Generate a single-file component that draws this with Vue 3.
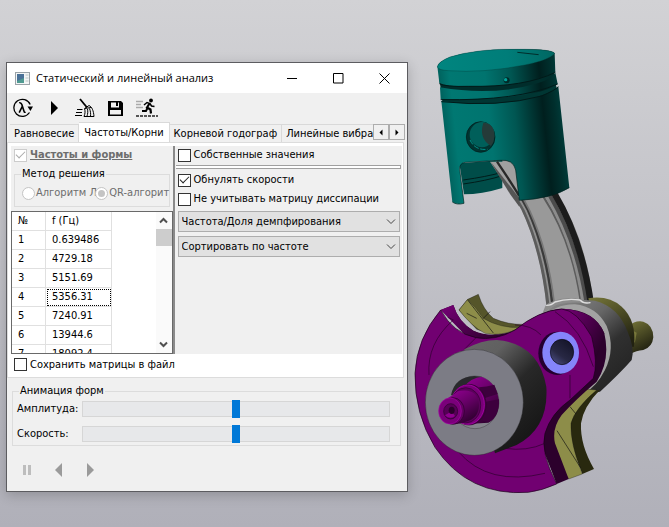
<script setup>
import { ref } from 'vue'

const tabs = ['Равновесие', 'Частоты/Корни', 'Корневой годограф', 'Линейные вибра']
const activeTab = ref(1)
const frequencies = ['0.639486', '4729.18', '5151.69', '5356.31', '7240.91', '13944.6', '18092.4']
const selected = ref(3)
const method = ref('qr')
const eigenvalues = ref(false)
const zeroVelocity = ref(true)
const ignoreDissipation = ref(false)
const saveMatrices = ref(false)
const showForms = ref(true)
const amplitude = ref(50)
const speed = ref(50)
</script>

<template>
  <main class="desktop">
    <section class="dialog">
      <header class="titlebar">
        <svg class="app-icon" width="15" height="13" viewBox="0 0 15 13">
          <rect x=".5" y=".5" width="14" height="12" fill="#f3f5f5" stroke="#9aa3a8" />
          <rect x="2" y="2" width="7" height="9" fill="#4f9a91" />
          <path d="M2 2h7v4L2 9z" fill="#4a7197" />
          <path d="M10.500 3h3M10.500 6h3M10.500 9h3" stroke="#b9c6c6" />
        </svg>
        <h1>Статический и линейный анализ</h1>
        <button class="win" aria-label="Свернуть"><svg width="11" height="11" viewBox="0 0 11 11"><path d="M0 5.500h10" /></svg></button>
        <button class="win" aria-label="Развернуть"><svg width="11" height="11" viewBox="0 0 11 11"><path d="M.5.5h9.500v9.500H.5z" /></svg></button>
        <button class="win" aria-label="Закрыть"><svg width="11" height="11" viewBox="0 0 11 11"><path d="M.5.5l10 10M10.500.5l-10 10" /></svg></button>
      </header>

      <nav class="toolbar">
        <button aria-label="Собственные значения">
          <svg width="22" height="20" viewBox="0 0 22 20">
            <path d="M18.200 6.500A8.500 8.500 0 1 0 17.500 14.500" fill="none" stroke="#000" stroke-width="1.300" />
            <path d="M15.500 8.500h5.500l-2.600 4.500z" />
            <path d="M7.200 4.800c2-.6 2.300.6 2.800 2.200l2 6.300c.3 1 .8 1.200 1.500.7M10.400 8.200L7.200 14.600" fill="none" stroke="#000" stroke-width="1.600" />
          </svg>
        </button>
        <button aria-label="Пуск">
          <svg width="22" height="20" viewBox="0 0 22 20"><path d="M8 3l7 7-7 7z" /></svg>
        </button>
        <button aria-label="Очистить">
          <svg width="22" height="20" viewBox="0 0 22 20" fill="none" stroke="#000">
            <path d="M6 1l7 8.500" stroke-width="1.800" />
            <path d="M10.500 10.500l4.500-3c3 1.500 4.500 5 5 11h-10c1-2.500 1.500-5 .5-8zM11 10.500l6-1M13.500 11c.5 2.500.3 5-.5 7M15.500 10.500c1 2.500 1.300 5 1 8M3 11.500h5.500M2 14.500h6M1 17.500h7" />
          </svg>
        </button>
        <button aria-label="Сохранить">
          <svg width="22" height="20" viewBox="0 0 22 20">
            <path d="M3 3h13l2 2v13H3z" />
            <path d="M6 4.500h8v5H6zM5 12h11v4.500H5z" fill="#f0f0f0" /><path d="M11 4h2v4h-2z" />
          </svg>
        </button>
        <button aria-label="Запуск анимации">
          <svg width="22" height="20" viewBox="0 0 22 20" fill="none">
            <path d="M0 3.500h7M0 6.500h5M0 9.500h7" stroke="#aaa" stroke-width="1.400" />
            <circle cx="15" cy="2.500" r="1.900" fill="#000" />
            <path d="M8 7l3-2.500 3 1 1.500 2.500 3 .5" stroke="#000" stroke-width="1.500" />
            <path d="M13.500 5.500l-2.500 4 3.500 2 .5 4" stroke="#000" stroke-width="2.200" />
            <path d="M11.500 10l-1.500 3H6" stroke="#000" stroke-width="1.900" />
            <path d="M0 18h22" stroke="#222" stroke-width="1.500" stroke-dasharray="3 1" />
          </svg>
        </button>
      </nav>

      <div class="tabbar">
        <div class="tabs" role="tablist">
          <button v-for="(tab, i) in tabs" :key="tab" role="tab" :aria-selected="activeTab === i" :class="{ active: activeTab === i }" @click="activeTab = i">{{ tab }}</button>
        </div>
        <button class="tab-scroll" aria-label="Назад"><svg width="6" height="7" viewBox="0 0 6 7"><path d="M4.500.5v6l-3-3z" /></svg></button>
        <button class="tab-scroll" aria-label="Вперёд"><svg width="6" height="7" viewBox="0 0 6 7"><path d="M1.500.5v6l3-3z" /></svg></button>
      </div>

      <div class="pane">
        <div class="split">
          <div class="left">
            <div class="solver">
              <label class="check heading"><input v-model="showForms" type="checkbox" disabled /><span>Частоты и формы</span></label>
              <fieldset class="methods">
                <legend>Метод решения</legend>
                <label><input v-model="method" type="radio" name="method" value="l" disabled /><span>Алгоритм Л</span></label>
                <label><input v-model="method" type="radio" name="method" value="qr" disabled /><span>QR-алгорит</span></label>
              </fieldset>
            </div>
            <div class="list">
              <div class="viewport">
                <table>
                  <thead><tr><th>№</th><th>f (Гц)</th></tr></thead>
                  <tbody>
                    <tr v-for="(f, i) in frequencies" :key="f" @click="selected = i">
                      <td>{{ i + 1 }}</td>
                      <td :class="{ focused: selected === i }">{{ f }}</td>
                    </tr>
                  </tbody>
                </table>
              </div>
              <div class="scrollbar">
                <button aria-label="Вверх"><svg width="9" height="7" viewBox="0 0 9 7"><path d="M1 5.500l3.500-3.500L8 5.500" /></svg></button>
                <span class="grip"></span>
                <button class="down" aria-label="Вниз"><svg width="9" height="7" viewBox="0 0 9 7"><path d="M1 1.500l3.500 3.500L8 1.500" /></svg></button>
              </div>
            </div>
          </div>
          <div class="splitter"></div>
          <div class="right">
            <label class="check"><input v-model="eigenvalues" type="checkbox" /><span>Собственные значения</span></label>
            <div class="groove"></div>
            <label class="check"><input v-model="zeroVelocity" type="checkbox" /><span>Обнулять скорости</span></label>
            <label class="check"><input v-model="ignoreDissipation" type="checkbox" /><span>Не учитывать матрицу диссипации</span></label>
            <div class="combo">
              <select aria-label="Представление"><option>Частота/Доля демпфирования</option></select>
              <svg width="10" height="6" viewBox="0 0 10 6"><path d="M1 .5l4 4 4-4" /></svg>
            </div>
            <div class="combo">
              <select aria-label="Сортировка"><option>Сортировать по частоте</option></select>
              <svg width="10" height="6" viewBox="0 0 10 6"><path d="M1 .5l4 4 4-4" /></svg>
            </div>
          </div>
        </div>
        <label class="check save"><input v-model="saveMatrices" type="checkbox" /><span>Сохранить матрицы в файл</span></label>
      </div>

      <fieldset class="animation">
        <legend>Анимация форм</legend>
        <label for="amplitude">Амплитуда:</label>
        <input id="amplitude" v-model="amplitude" type="range" />
        <label for="speed">Скорость:</label>
        <input id="speed" v-model="speed" type="range" />
      </fieldset>
      <div class="player">
        <button aria-label="Пауза" disabled><svg width="12" height="14" viewBox="0 0 12 14"><path d="M2 2h3v10H2zM7 2h3v10H7z" fill="#bdbdbd" /></svg></button>
        <button aria-label="Предыдущий"><svg width="12" height="14" viewBox="0 0 12 14"><path d="M9 0v14L2 7z" fill="#9a9a9a" /></svg></button>
        <button aria-label="Следующий"><svg width="12" height="14" viewBox="0 0 12 14"><path d="M2 0v14l7-7z" fill="#9a9a9a" /></svg></button>
      </div>
    </section>

    <svg class="model" viewBox="408 0 261 527" aria-hidden="true">
      <defs>
        <linearGradient id="teal" gradientUnits="userSpaceOnUse" x1="38" y1="60" x2="425" y2="20">
          <stop offset="0" stop-color="#00645f" /><stop offset=".08" stop-color="#007872" /><stop offset=".35" stop-color="#00746f" />
          <stop offset=".55" stop-color="#005652" /><stop offset=".77" stop-color="#001f1e" /><stop offset=".86" stop-color="#002f2d" /><stop offset="1" stop-color="#00504d" />
        </linearGradient>
        <linearGradient id="crown"><stop offset="0" stop-color="#00857f" /><stop offset=".6" stop-color="#007d79" /><stop offset="1" stop-color="#006762" /></linearGradient>
        <linearGradient id="hub" x1="0" y1="0" x2=".7" y2="1"><stop offset="0" stop-color="#666" /><stop offset=".25" stop-color="#606060" /><stop offset=".55" stop-color="#282828" /><stop offset="1" stop-color="#151515" /></linearGradient>
        <linearGradient id="bearing" x1="0" y1="0" x2=".8" y2="1"><stop offset="0" stop-color="#909090" /><stop offset=".4" stop-color="#666" /><stop offset=".65" stop-color="#303030" /><stop offset="1" stop-color="#222" /></linearGradient>
        <linearGradient id="olive" x1="0" y1="0" x2=".5" y2="1"><stop offset="0" stop-color="#77773a" /><stop offset=".4" stop-color="#555529" /><stop offset="1" stop-color="#222211" /></linearGradient>
        <linearGradient id="purpleSide" x1="0" y1="0" x2="1" y2=".7"><stop offset="0" stop-color="#770077" /><stop offset=".5" stop-color="#500050" /><stop offset="1" stop-color="#280028" /></linearGradient>
        <linearGradient id="shaft" x1="0" y1="0" x2=".6" y2="1"><stop offset="0" stop-color="#960096" /><stop offset=".5" stop-color="#680068" /><stop offset="1" stop-color="#300030" /></linearGradient>
        <linearGradient id="bore" x1="0" y1="1" x2=".7" y2="0"><stop offset="0" stop-color="#53558f" /><stop offset=".45" stop-color="#282844" /><stop offset="1" stop-color="#15152a" /></linearGradient>
      </defs>

      <!-- connecting rod -->
      <g transform="translate(480 150) scale(.33333)" fill="none">
        <path d="M33 35Q90 120 120 170Q185 300 200 478L342 465Q315 250 228 130L105 25z" fill="#999" />
        <path d="M38 35Q97 115 130 175Q189 300 207 472" stroke="#5c5c5c" stroke-width="14" />
        <path d="M45 35Q103 118 137 180Q192 300 211 460" stroke="#919191" stroke-width="6" />
        <path d="M57 35Q110 115 144 180Q200 305 217 460" stroke="#3a3a3a" stroke-width="8" />
        <path d="M64 35Q118 121 149 182Q205 305 222 455" stroke="#777" stroke-width="5" />
        <path d="M190 140Q275 270 302 453" stroke="#5c5c5c" stroke-width="6" />
        <path d="M199 138Q284 280 309 460" stroke="#8c8c8c" stroke-width="9" />
        <path d="M210 137Q293 280 320 462" stroke="#4c4c4c" stroke-width="12" />
        <path d="M223 130Q306 270 333 463" stroke="#1c1c1c" stroke-width="19" />
      </g>

      <g transform="translate(405 270) scale(.33333)" stroke-linejoin="round">
        <!-- rear crank web and output shaft -->
        <path d="M670 170Q690 150 715 155Q745 165 745 202Q742 232 715 240Q692 243 680 250L665 240z" fill="url(#olive)" />
        <path d="M680 180l15 8-5 28-15 12z" fill="#77773a" />
        <path d="M550 85Q610 75 650 110Q695 150 687 230L600 240z" fill="url(#olive)" />
        <path d="M162 120L188 88L220 73Q235 120 265 145Q310 165 360 163L330 182L270 194L215 178z" fill="#55552a" stroke="#111" stroke-width="1" />
        <path d="M162 120L188 88Q215 115 235 145Q285 175 345 172L320 184Q280 198 240 190Q200 170 162 120z" fill="#8d8d49" stroke="#111" stroke-width="1" />
        <path d="M188 90L265 189M215 145L185 130M235 145L255 125" fill="none" stroke="#111" stroke-width="2" />

        <!-- rod big end -->
        <path d="M405 145Q445 95 510 88L570 92Q640 110 668 185Q690 235 680 270Q645 310 585 365L530 375z" fill="url(#bearing)" />
        <path d="M407 148Q450 102 510 103Q575 110 605 168Q632 235 600 300Q575 350 535 372L520 360Q585 290 588 210Q570 120 475 116z" fill="#a3a3a3" />
        <path d="M408 142Q430 115 455 104Q510 92 560 102L510 84Q470 82 450 92Q425 98 420 110z" fill="#8c8c8c" />
        <path d="M425 106Q440 106 450 96Q485 84 525 90Q536 102 555 98" fill="none" stroke="#dedede" stroke-width="4" stroke-linecap="round" />

        <!-- lower rear counterweight -->
        <path d="M535 370L585 359Q535 410 528 460Q525 525 567 597L532 612L490 500L500 405z" fill="#29290f" />
        <path d="M515 355L575 360Q510 415 498 460Q495 520 532 612L491 627L430 530L440 430z" fill="#8d8d49" stroke="#111" />
        <path d="M495 410l18 22M456 482l70 110" fill="none" stroke="#111" stroke-width="2" />

        <!-- front crank web -->
        <path d="M107 120L145 105Q160 155 205 182Q260 210 325 184Q410 116 475 116Q570 120 598 190Q617 270 575 335Q510 390 470 435Q440 475 450 520L491 627L455 642Q400 500 300 250z" fill="#2c002c" />
        <path d="M107 120L145 105Q160 155 205 182Q260 205 325 184L320 200L260 217L190 205z" fill="url(#purpleSide)" />
        <path d="M470 117Q570 120 598 190L573 270L530 180z" fill="url(#purpleSide)" />
        <path d="M107 120Q35 205 30 310Q28 430 90 532Q190 680 370 667Q410 662 455 642Q405 545 420 490Q438 430 495 390L565 325Q580 280 560 200Q515 120 470 117Q400 122 330 180Q270 214 213 203Q145 190 107 120z" fill="#710071" stroke="#180018" stroke-width="2" />
        <g fill="none" stroke="#2a002a" stroke-width="2">
          <path d="M145 150Q65 220 72 315M145 150l-17-8M160 545Q250 650 420 610M178 238l35-35M330 165Q380 165 408 195M450 125Q530 175 565 290M495 315v70M300 535Q365 545 420 520" />
        </g>

        <!-- crankpin -->
        <ellipse cx="457" cy="250" rx="57" ry="65" fill="#240030" />
        <ellipse cx="467" cy="248" rx="55" ry="63" fill="#8585fb" />
        <ellipse cx="471" cy="246" rx="35" ry="38" fill="url(#bore)" stroke="#080814" stroke-width="2" />

        <!-- main journal -->
        <path d="M178 238Q230 210 275 210Q400 220 424 350Q432 475 335 525L270 550z" fill="url(#hub)" />
        <ellipse cx="208" cy="397" rx="147" ry="159" fill="#7c7c85" stroke="#181818" stroke-width="1" />
        <ellipse cx="210" cy="397" rx="72" ry="79" fill="#84848c" stroke="#222" />
        <path d="M138 375Q150 320 208 318L230 320L200 370z" fill="#29292c" />
        <path d="M175 352Q200 322 230 320Q280 340 282 400Q280 440 250 458L190 462z" fill="url(#shaft)" />
        <path d="M222 352Q245 350 268 344L278 372L240 384zM243 395L282 388Q284 440 252 457L232 452z" fill="#3d003d" />
        <ellipse cx="192" cy="404" rx="51" ry="61" fill="#500050" stroke="#2a002a" stroke-width="2" />
        <ellipse cx="188" cy="404" rx="50" ry="59" fill="#780078" stroke="#a000a0" stroke-width="3" />
        <ellipse cx="182" cy="406" rx="45" ry="53" fill="#5c005c" stroke="#320032" stroke-width="2" />
        <path d="M125 386Q142 378 158 364Q218 352 222 405Q222 445 182 455Q165 462 150 462z" fill="url(#shaft)" />
        <ellipse cx="144" cy="423" rx="34" ry="40" fill="#630063" stroke="#2a002a" stroke-width="2" />
        <ellipse cx="135" cy="423" rx="34" ry="39" fill="#7a007a" stroke="#a600a6" stroke-width="2" />
        <ellipse cx="137" cy="424" rx="21" ry="23" fill="#560056" stroke="#2c002c" stroke-width="2" />
        <path d="M120 436Q134 450 150 438L140 424z" fill="#900090" /><ellipse cx="140" cy="421" rx="9" ry="11" fill="#2c002c" />
      </g>

      <!-- piston -->
      <g transform="translate(425 40) scale(.33333)">
        <path d="M103 370L232 360L232 444Q170 463 117 463z" fill="#004d49" />
        <path d="M115 420Q185 410 232 397M115 432Q185 422 232 407" stroke="#001c1a" stroke-width="3" fill="none" />
        <path d="M195 365H252Q275 378 276 410L283 475L255 455z" fill="#a0a0a0" />
        <path d="M197 365Q245 425 283 475V500L255 462Q220 405 197 365z" fill="#555" />
        <path d="M216 365Q260 430 282 467" stroke="#292929" stroke-width="7" fill="none" />
        <path d="M50 170L390 120L396 150Q300 215 54 200z" fill="#003633" />
        <path d="M49 183Q180 204 310 177Q370 163 400 140L433 443Q380 476 283 481L272 390Q265 357 225 361L120 367Q102 370 104 390L117 490Q95 496 82 486z" fill="url(#teal)" />
        <path d="M43 120L389 80L388 112Q330 150 130 165L48 150z" fill="#002d2b" />
        <path d="M45 142Q205 170 340 129Q380 116 391 98L398 132Q340 179 47 178z" fill="url(#teal)" />
        <path d="M37 79Q40 65 75 51Q160 25 280 28Q379 27 389 40L391 97Q300 143 130 138Q60 140 43 129z" fill="url(#teal)" />
        <path d="M37 81Q40 65 75 51Q160 25 280 28Q379 27 389 40Q375 60 300 75Q175 100 70 92Q42 91 37 81z" fill="url(#crown)" stroke="#00302e" stroke-width="1" />
        <path d="M277 37l64 7" stroke="#002c2a" stroke-width="3" />
        <path d="M43 131Q62 141 130 139Q300 142 391 97M47 179Q280 183 398 132M49 185Q220 203 350 168Q390 151 400 140" stroke="#001a19" stroke-width="3" fill="none" />
        <path d="M82 486Q95 496 117 490L104 388Q103 370 120 367L225 361Q265 357 272 390L283 481Q380 476 433 443" stroke="#001f1d" stroke-width="2" fill="none" />
        <circle cx="245" cy="121" r="9" fill="#002b29" /><circle cx="242" cy="119" r="5" fill="#00a39b" />
        <ellipse cx="167" cy="291" rx="43" ry="46" fill="#003431" stroke="#001a18" stroke-width="2" />
        <ellipse cx="171" cy="284" rx="37" ry="38" fill="#005f5a" />
        <path d="M175 249Q208 248 208 290Q207 307 198 318Q160 295 175 249z" fill="#253b39" />
        <path d="M135 300Q150 332 188 328" stroke="#009089" stroke-width="3" fill="none" stroke-dasharray="16 5" />
      </g>
    </svg>
  </main>
</template>

<style>
body { margin: 0; background: #c8c8cc; }
</style>

<style scoped>
* { box-sizing: border-box; }
.desktop {
  display: grid;
  grid-template-columns: minmax(0, 402fr) minmax(0, 261fr);
  align-items: start;
  min-height: 100vh;
  padding-left: 6px;
  background: linear-gradient(#d2d2d5, #b0b0b9);
  color: #000;
  font: 11px/14px "DejaVu Sans Condensed", "Noto Sans", sans-serif;
}
.model { display: block; width: 100%; }
button, select, input { font: inherit; color: inherit; margin: 0; }
button { padding: 0; border: 0; background: none; }
svg { display: block; }
.dialog { margin-top: 62px; border: 1px solid #5c5c60; background: #f0f0f0; box-shadow: 0 3px 12px #0003; }
.titlebar { display: flex; align-items: center; height: 30px; padding-left: 8px; background: #fff; }
.titlebar h1 { flex: 1; margin: 0 0 0 6px; font: 11px/16px "Open Sans", "Noto Sans", sans-serif; white-space: nowrap; }
.win { display: grid; place-items: center; width: 46px; height: 30px; }
.win svg { fill: none; stroke: #000; }
.toolbar { display: flex; gap: 9px; height: 29px; padding: 3px 0 0 5px; }
.toolbar button { height: 24px; }
.tabbar { display: flex; align-items: flex-end; height: 20px; padding: 0 2px 0 3px; }
.tabs { display: flex; flex: 1; align-items: flex-end; min-width: 0; height: 20px; overflow: hidden; }
.tabs button { flex: none; height: 18px; padding: 0 4px; border: 1px solid #d9d9d9; border-left-width: 0; border-bottom: 0; background: #f0f0f0; white-space: nowrap; }
.tabs button.active { height: 20px; padding: 0 5px; background: #fff; }
.tab-scroll { display: grid; flex: none; place-items: center; width: 16px; height: 16px; margin-bottom: 2px; border: 1px solid #adadad; background: #f0f0f0; }
.pane { margin-right: 3px; padding: 3px 1px 0 3px; border: 1px solid #dcdcdc; background: #fff; }
.split { display: grid; grid-template: 208px / minmax(0, 162fr) 2px minmax(0, 228fr); }
.left { display: flex; flex-direction: column; min-width: 0; min-height: 0; }
.solver { flex: none; height: 65px; padding: 2px 3px 0; background: #f0f0f0; }
.check { display: flex; align-items: center; gap: 3px; height: 14px; white-space: nowrap; }
input[type="checkbox"] { display: grid; flex: none; place-items: center; width: 13px; height: 13px; border: 1px solid #333; background: #fff; appearance: none; }
input[type="checkbox"]:checked::after { content: ""; width: 8px; height: 4px; margin-top: -3px; border: solid #222; border-width: 0 0 1px 1px; transform: rotate(-45deg); }
input[type="checkbox"]:disabled { border-color: #ccc; }
input[type="checkbox"]:disabled::after { border-color: #aaa; }
.heading { color: #6d6d6d; font-weight: bold; text-decoration: underline; }
fieldset { min-width: 0; margin: 0; border: 1px solid #dcdcdc; }
legend { padding: 0 1px; line-height: 14px; }
.methods { display: grid; grid-template-columns: minmax(0, 74fr) minmax(0, 74fr); height: 40px; margin-top: 5px; padding: 5px 0 0 7px; color: #6d6d6d; }
.methods legend { color: #000; margin-left: -1px; }
.methods label { display: flex; align-items: center; gap: 1px; height: 14px; white-space: nowrap; }
input[type="radio"] { display: grid; flex: none; place-items: center; width: 13px; height: 13px; border: 1px solid #c4c4c4; border-radius: 50%; background: #fff; appearance: none; }
input[type="radio"]:checked::after { content: ""; width: 7px; height: 7px; border-radius: 50%; background: #c4c4c4; }
.list { display: flex; flex: 1; min-height: 0; border: 1px solid #696969; }
.viewport { flex: 1; min-width: 0; overflow: hidden; }
table { width: 100px; border-collapse: separate; border-spacing: 0; table-layout: fixed; }
th, td { height: 19px; padding: 0 0 0 6px; border: solid #e0e0e0; border-width: 0 1px 1px 0; font-weight: normal; text-align: left; }
th:first-child, td:first-child { width: 34px; }
.focused { outline: 1px dotted #000; outline-offset: -2px; }
.scrollbar { display: flex; flex-direction: column; width: 16px; background: #fafafa; }
.scrollbar button { display: grid; place-items: center; height: 17px; }
.scrollbar svg { fill: none; stroke: #505050; stroke-width: 2; }
.grip { height: 17px; background: #cdcdcd; }
.scrollbar .down { margin-top: auto; }
.splitter { background: #8a8a8a; }
.right { display: flex; flex-direction: column; min-width: 0; padding: 2px 2px 0 3px; background: #f0f0f0; }
.groove { height: 4px; margin: 3px -1px 4px -2px; border: 1px solid #a0a0a0; border-left: 0; background: #fff; }
.right .check { margin-bottom: 5px; }
.right .check:first-child { margin-bottom: 0; }
.combo { position: relative; height: 21px; margin-bottom: 4px; }
.combo select { width: 100%; height: 21px; padding: 0 20px 0 3px; border: 1px solid #adadad; border-radius: 0; background: #e1e1e1; appearance: none; }
.combo svg { position: absolute; top: 8px; right: 4px; fill: none; stroke: #444; pointer-events: none; }
.save { height: 23px; padding: 0 0 2px 3px; }
.animation { display: grid; grid-template-columns: 65px minmax(0, 1fr); row-gap: 7px; align-items: center; margin: 6px 6px 0 5px; padding: 2px 10px 2px 4px; }
.animation legend { margin-left: 2px; }
input[type="range"] { width: 100%; height: 18px; background: none; appearance: none; }
input[type="range"]::-webkit-slider-runnable-track { height: 16px; border: 1px solid #d6d6d6; background: #e7e8ea; }
input[type="range"]::-webkit-slider-thumb { width: 8px; height: 18px; margin-top: -2px; background: #0078d7; border: 0; border-radius: 0; appearance: none; }
.player { display: flex; gap: 20px; padding: 17px 14px 14px; }
</style>
